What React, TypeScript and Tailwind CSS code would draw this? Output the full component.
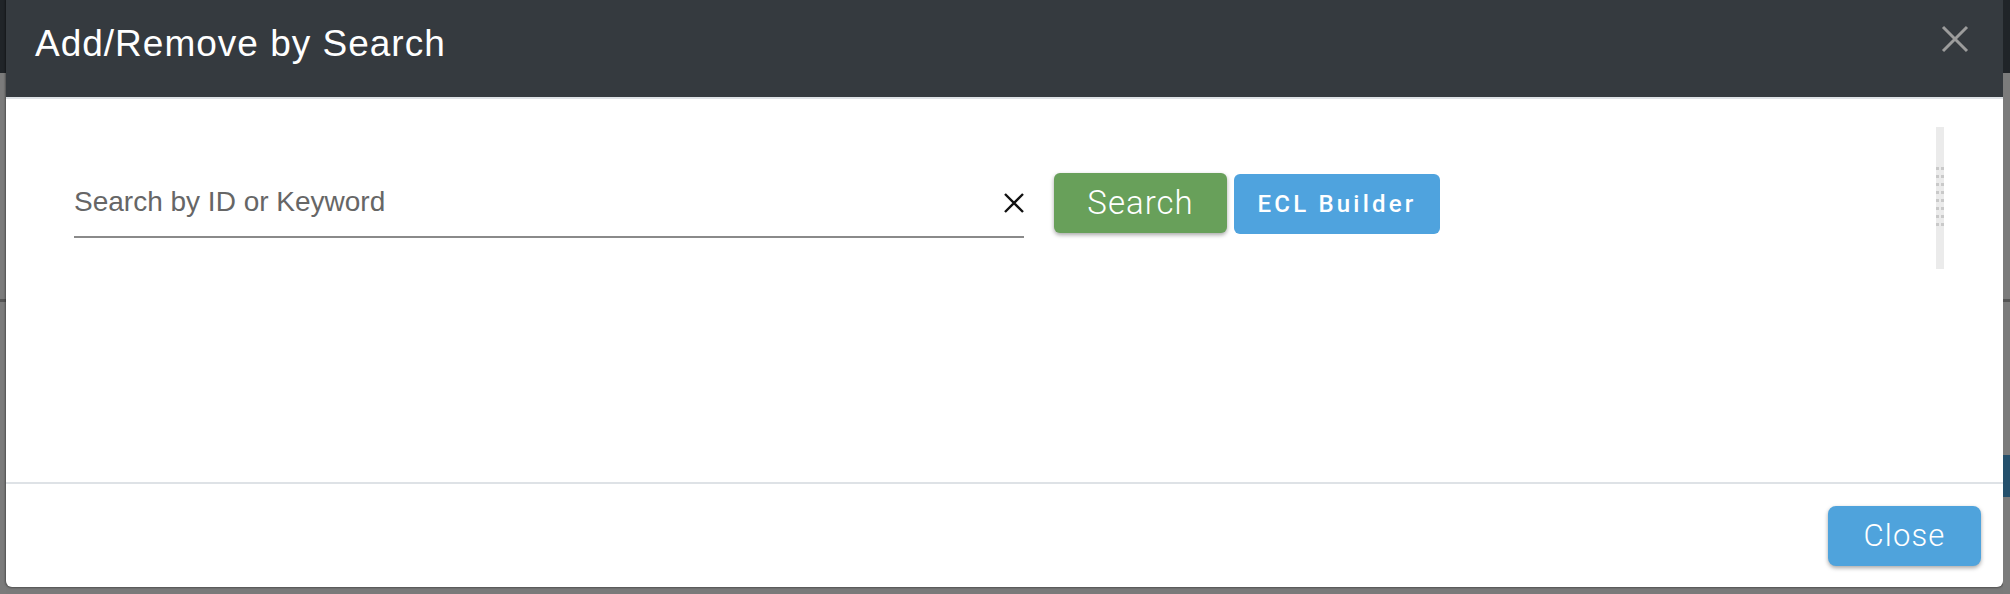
import React from 'react';

const sans = { fontFamily: '"Liberation Sans", Arial, sans-serif' };
const roboto = { fontFamily: 'Roboto, "Liberation Sans", sans-serif' };

function Grip() {
  return (
    <div className="w-[8px] h-[142px] bg-[#ebebeb] flex flex-col items-center pt-[40px]">
      {Array.from({ length: 8 }).map((_, i) => (
        <div key={i} className="flex gap-[2px] h-[8px]">
          <span className="w-[3px] h-[3px] bg-[#c9c9c9]" />
          <span className="w-[3px] h-[3px] bg-[#c9c9c9]" />
        </div>
      ))}
    </div>
  );
}

export default function App() {
  return (
    <div className="w-[2010px] h-[594px] bg-[#7a7a7a] flex items-start overflow-hidden">
      {/* page behind the overlay, left edge */}
      <div className="w-[6px] h-full flex flex-col">
        <div className="h-[73px] bg-[#202428]" />
        <div className="h-[226px] bg-[#7b7b7b]" />
        <div className="h-[3px] bg-[#555]" />
        <div className="flex-1 bg-[#7b7b7b]" />
      </div>

      <div className="w-[1997px] h-[587px] bg-white rounded-b-[6px] flex flex-col shadow-[0_0_2px_1px_rgba(0,0,0,0.35)]">
        <div className="h-[99px] bg-[#353a3f] border-b-2 border-[#dee2e6] flex items-start justify-between pl-[29px] pr-[34px]">
          <h1 className="mt-[22px] text-[37px] leading-[44px] text-white tracking-[1px]" style={sans}>
            Add/Remove by Search
          </h1>
          <button className="mt-[25px] w-[28px] h-[28px]">
            <svg viewBox="0 0 28 28" className="w-[28px] h-[28px]">
              <path d="M2 2L26 26M26 2L2 26" stroke="#9c9c9c" strokeWidth="3" />
            </svg>
          </button>
        </div>

        <div className="flex-1 flex items-start justify-between pl-[68px] pr-[59px] pt-[28px]">
          <div className="mt-[46px] flex items-start">
            <div className="w-[950px] h-[65px] border-b-2 border-[#8a8a8a] flex items-start pt-[13px]">
              <input
                type="text"
                placeholder="Search by ID or Keyword"
                className="flex-1 h-[32px] text-[28px] outline-none bg-transparent placeholder:text-[#666] text-[#333]"
                style={sans}
              />
              <svg viewBox="0 0 22 22" className="w-[22px] h-[22px] mt-[6px] mr-[-1px]">
                <path d="M2 2L20 20M20 2L2 20" stroke="#111" strokeWidth="2.4" />
              </svg>
            </div>
            <button
              className="ml-[30px] w-[173px] h-[60px] bg-[#68a05a] rounded-[6px] text-white text-[33px] font-light tracking-[1px] shadow-[0_2px_4px_rgba(0,0,0,0.35)]"
              style={roboto}
            >
              Search
            </button>
            <button
              className="ml-[7px] mt-[1px] w-[206px] h-[60px] bg-[#4fa3de] rounded-[6px] text-white text-[24px] font-medium tracking-[3.2px]"
              style={roboto}
            >
              ECL Builder
            </button>
          </div>
          <Grip />
        </div>

        <div className="h-[105px] border-t-2 border-[#dee2e6] flex justify-end items-start pt-[22px] pr-[22px]">
          <button
            className="w-[153px] h-[60px] bg-[#4fa3dc] rounded-[8px] text-white text-[31px] font-light tracking-[1.2px] shadow-[0_2px_4px_rgba(0,0,0,0.35)]"
            style={roboto}
          >
            Close
          </button>
        </div>
      </div>

      {/* page behind the overlay, right edge */}
      <div className="flex-1 h-full flex flex-col">
        <div className="h-[73px] bg-[#202428]" />
        <div className="h-[226px] bg-[#7b7b7b]" />
        <div className="h-[3px] bg-[#555]" />
        <div className="h-[153px] bg-[#7b7b7b]" />
        <div className="h-[42px] bg-[#24506c]" />
        <div className="flex-1 bg-[#7b7b7b]" />
      </div>
    </div>
  );
}
